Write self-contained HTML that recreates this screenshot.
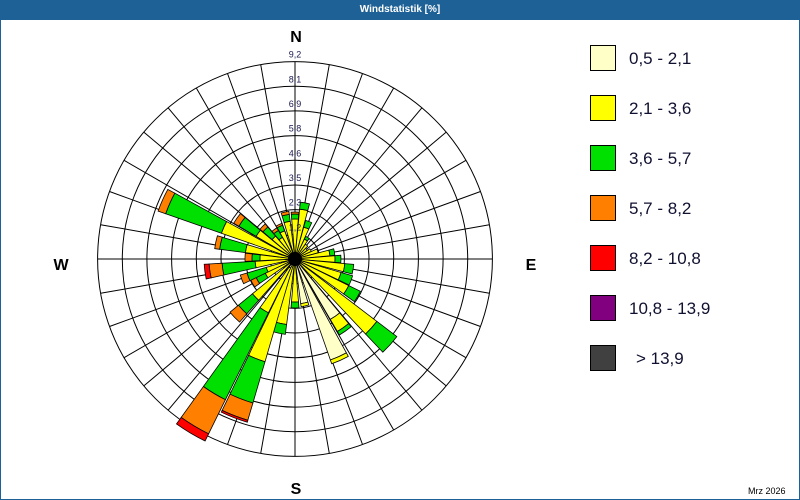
<!DOCTYPE html>
<html><head><meta charset="utf-8"><style>
html,body{margin:0;padding:0;background:#fff}
#w{position:relative;width:798px;height:498px;border:1px solid #1e6196;overflow:hidden;font-family:"Liberation Sans",sans-serif}
#t{height:19px;background:#1e6196;color:#fff;font-size:10px;font-weight:bold;text-align:center;line-height:18px}
svg{position:absolute;left:-1px;top:-1px}
</style></head><body><div id="w"><div id="t">Windstatistik [%]</div>
<svg id="s" width="800" height="500" xmlns="http://www.w3.org/2000/svg"></svg></div>
<script>
var cx=295,cy=259,R=197.4,st=R/8,h='';
var C=['#ffffc8','#ffff00','#00e000','#ff8000','#ff0000','#800080','#404040'];
function P(a,r){a=a*Math.PI/180;return[(cx+r*Math.sin(a)).toFixed(1),(cy-r*Math.cos(a)).toFixed(1)];}
for(var k=1;k<=8;k++)h+='<circle cx="'+cx+'" cy="'+cy+'" r="'+(st*k).toFixed(1)+'" fill="none" stroke="#000" stroke-width="1"/>';
h+='<circle cx="'+cx+'" cy="'+cy+'" r="14" fill="none" stroke="#000"/>';
for(var a=0;a<360;a+=10){var p=P(a,R);h+='<line x1="'+cx+'" y1="'+cy+'" x2="'+p[0]+'" y2="'+p[1]+'" stroke="#000" stroke-width="1"/>';}
var B=[
[0,[0,40,45,47]],[10,[0,50,57]],[20,[0,33,40]],[30,[0,22,25]],[40,[0,18]],[50,[0,15]],[60,[0,18]],[70,[0,24]],
[80,[0,35,40]],[90,[0,40,46]],[100,[0,50,59]],[111,[0,48,60]],[121,[0,60,73]],[132,[0,103,128]],
[145,[70,84,88]],[156,[107,111]],[168,[45,48]],[180,[0,43,49]],[192,[0,66,76]],
[201,[0,107,150,168,170]],[211,[10,60,157,195,203]],[226,[0,55,73,84]],[240,[0,33,43,49]],[249,[0,30,50,57]],
[262,[0,40,73,86,91]],[272,[0,35,43,50]],[282,[0,50,76,81]],[294,[0,78,137,145]],[305,[0,45,65,71]],
[315,[0,30,42,46]],[325,[0,25,33,36]],[335,[0,30,36,38]],[348,[0,38,45,48]]];
B.forEach(function(b){var a=b[0],s=b[1],r0=0,w=4.7;
 for(var i=0;i<s.length;i++){var r1=s[i];if(r1<=r0)continue;
  var p1=P(a-w,r0),p2=P(a-w,r1),p3=P(a+w,r1),p4=P(a+w,r0);
  h+='<path d="M'+p1+' L'+p2+' A'+r1+' '+r1+' 0 0 1 '+p3+' L'+p4+(r0>0?' A'+r0+' '+r0+' 0 0 0 '+p1:'')+'Z" fill="'+C[i]+'" stroke="#000" stroke-width="0.8"/>';
  r0=r1;}});
h+='<circle cx="'+cx+'" cy="'+cy+'" r="7" fill="#000"/>';
var L=['1,2','2,3','3,5','4,6','5,8','6,9','8,1','9,2'];
for(var k=1;k<=8;k++)h+='<text x="'+cx+'" y="'+(cy-st*k-4).toFixed(1)+'" font-size="9" fill="#1a1a50" text-anchor="middle">'+L[k-1]+'</text>';
h+='<g font-weight="bold" font-size="16" fill="#000" text-anchor="middle"><text x="296" y="42">N</text><text x="296" y="494">S</text><text x="61" y="270">W</text><text x="531" y="270">E</text></g>';
var T=['0,5 - 2,1','2,1 - 3,6','3,6 - 5,7','5,7 - 8,2','8,2 - 10,8','10,8 - 13,9','&gt; 13,9'];
for(var i=0;i<7;i++){var y=45+i*50;h+='<rect x="590.5" y="'+(y+.5)+'" width="25" height="25" fill="'+C[i]+'" stroke="#000"/><text x="'+(i==6?636:629)+'" y="'+(y+19)+'" font-size="17" fill="#101030">'+T[i]+'</text>';}
h+='<text x="748" y="494" font-size="9" fill="#000">Mrz 2026</text>';
document.getElementById('s').innerHTML=h;
</script></body></html>
